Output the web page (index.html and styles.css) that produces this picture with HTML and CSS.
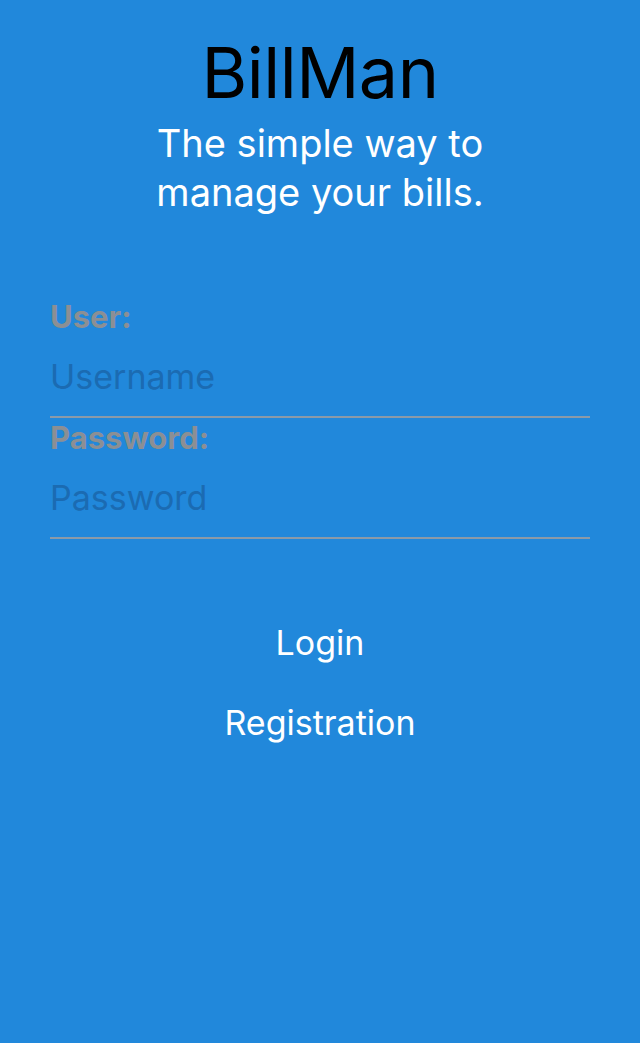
FILE: index.html
```html
<!DOCTYPE html>
<html>
<head>
<meta charset="utf-8">
<link rel="stylesheet" href="styles.css">
</head>
<body>
<div class="screen">
  <header class="header">
    <h1 class="title">BillMan</h1>
    <p class="subtitle">The simple way to<br>manage your bills.</p>
  </header>
  <form class="form">
    <label class="label">User:</label>
    <div class="field"><span class="placeholder">Username</span></div>
    <label class="label">Password:</label>
    <div class="field"><span class="placeholder">Password</span></div>
  </form>
  <div class="actions">
    <div class="btn">Login</div>
    <div class="btn">Registration</div>
  </div>
</div>
</body>
</html>
```
FILE: styles.css
```css
html, body {
  margin: 0;
  padding: 0;
}
body {
  background: #2188db;
  font-family: Inter, "Noto Sans", sans-serif;
}
.screen {
  width: 640px;
  height: 1043px;
  display: flex;
  flex-direction: column;
}
.header {
  display: flex;
  flex-direction: column;
  align-items: center;
  padding-top: 33px;
}
.title {
  margin: 0;
  font-size: 70px;
  font-weight: 400;
  line-height: 80px;
  color: #000;
  letter-spacing: -0.5px;
}
.subtitle {
  margin: 6px 0 0;
  font-size: 38px;
  line-height: 49px;
  color: #fff;
  text-align: center;
}
.form {
  display: flex;
  flex-direction: column;
  margin: 80px 50px 0;
}
.label {
  font-size: 31px;
  font-weight: 700;
  color: #8b8f94;
  line-height: 40px;
}
.field {
  height: 79px;
  border-bottom: 2px solid #8b9aa8;
  display: flex;
  align-items: center;
}
.placeholder {
  font-size: 34px;
  color: #1b6bb2;
}
.actions {
  display: flex;
  flex-direction: column;
  align-items: center;
  margin-top: 82px;
  gap: 36px;
}
.btn {
  font-size: 34px;
  color: #fff;
  line-height: 44px;
}
```
